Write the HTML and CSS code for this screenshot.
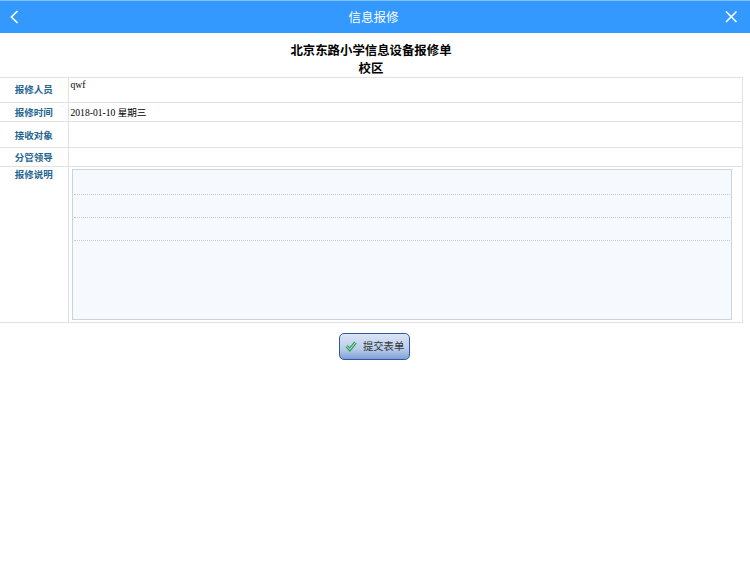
FILE: index.html
```html
<!DOCTYPE html>
<html lang="zh-CN">
<head>
    <meta charset="UTF-8">
    <title>信息报修</title>
    <link rel="stylesheet" href="styles.css">
</head>
<body>
    <div class="top-bar">
        <svg class="top-icon" width="14" height="16" viewBox="0 0 14 16"><path d="M10.5 3 L4.5 9 L10.5 15" fill="none" stroke="#fff" stroke-width="1.7"/></svg>
        <span class="top-title">信息报修</span>
        <svg class="top-icon" width="14" height="16" viewBox="0 0 14 16"><path d="M2 3.5 L12.5 14 M12.5 3.5 L2 14" fill="none" stroke="#fff" stroke-width="1.6"/></svg>
    </div>

    <div class="form-title">
        <div>北京东路小学信息设备报修单</div>
        <div>校区</div>
    </div>

    <table class="form-table">
        <tr class="row-person">
            <th>报修人员</th>
            <td class="top-text">qwf</td>
        </tr>
        <tr class="row-time">
            <th>报修时间</th>
            <td>2018-01-10 星期三</td>
        </tr>
        <tr class="row-target">
            <th>接收对象</th>
            <td></td>
        </tr>
        <tr class="row-leader">
            <th>分管领导</th>
            <td></td>
        </tr>
        <tr class="row-desc">
            <th>报修说明</th>
            <td>
                <div class="desc-box">
                    <div class="desc-line"></div>
                    <div class="desc-line"></div>
                    <div class="desc-line"></div>
                </div>
            </td>
        </tr>
    </table>

    <div class="actions">
        <button class="submit-btn">
            <svg width="14" height="14" viewBox="0 0 14 14"><path d="M2.5 7 L5.8 10.5 L11.5 3.5" fill="none" stroke="#2f9e68" stroke-width="3.2"/><path d="M2.5 7 L5.8 10.5 L11.5 3.5" fill="none" stroke="#c4f0c0" stroke-width="1"/></svg>
            <span>提交表单</span>
        </button>
    </div>
</body>
</html>
```

FILE: styles.css
```css
* {
    box-sizing: border-box;
}

body {
    margin: 0;
    background-color: #ffffff;
    font-family: "Liberation Serif", "Noto Sans CJK SC", serif;
    color: #000000;
}

.top-bar {
    height: 33px;
    display: flex;
    align-items: center;
    justify-content: space-between;
    padding: 0 12px 2px 7px;
    background-color: #3399ff;
    border-top: 1px solid #7cc0ff;
}

.top-title {
    padding-left: 2px;
    font-family: "Noto Sans CJK SC", sans-serif;
    font-size: 12.5px;
    color: #ffffff;
}

.form-title {
    margin: 8px 8px 0 0;
    height: 36px;
    text-align: center;
    font-family: "Noto Sans CJK SC", sans-serif;
    font-size: 12.4px;
    font-weight: bold;
    line-height: 18px;
}

.form-table {
    width: 743px;
    border-collapse: collapse;
    table-layout: fixed;
    font-size: 9.6px;
}

.form-table th,
.form-table td {
    border: 1px solid #e2e2e2;
    padding: 0;
}

.form-table tr > :first-child {
    border-left: none;
}

.form-table th {
    width: 68px;
    font-family: "Noto Sans CJK SC", sans-serif;
    font-size: 9.5px;
    color: #1f6590;
}

.form-table td {
    padding-left: 2px;
}

.row-person { height: 25px; }
.row-time { height: 19px; }
.row-target { height: 26px; }
.row-leader { height: 19px; }
.row-desc { height: 156px; }

.row-person th {
    padding-bottom: 2px;
}

.top-text {
    vertical-align: top;
    line-height: 14px;
}

.row-desc th {
    vertical-align: top;
}

.form-table .row-desc td {
    padding: 2px 10px 2px 3px;
}

.desc-box {
    height: 151px;
    padding: 24px 1px 0;
    border: 1px solid #c8d4e0;
    background-color: #f6faff;
}

.desc-line {
    height: 23px;
    border-top: 1px dotted #c4c8cc;
}

.actions {
    display: flex;
    justify-content: center;
    padding: 10px 1px 0 0;
}

.submit-btn {
    width: 71px;
    height: 27px;
    display: flex;
    align-items: center;
    gap: 5px;
    padding: 0 0 2px 4px;
    border: 1px solid #2f5aa0;
    border-radius: 5px;
    background: linear-gradient(#dbe5f4, #b9cdea 60%, #7f9fd6);
    font-family: "Noto Sans CJK SC", sans-serif;
    font-size: 10.3px;
    color: #333333;
}
```
